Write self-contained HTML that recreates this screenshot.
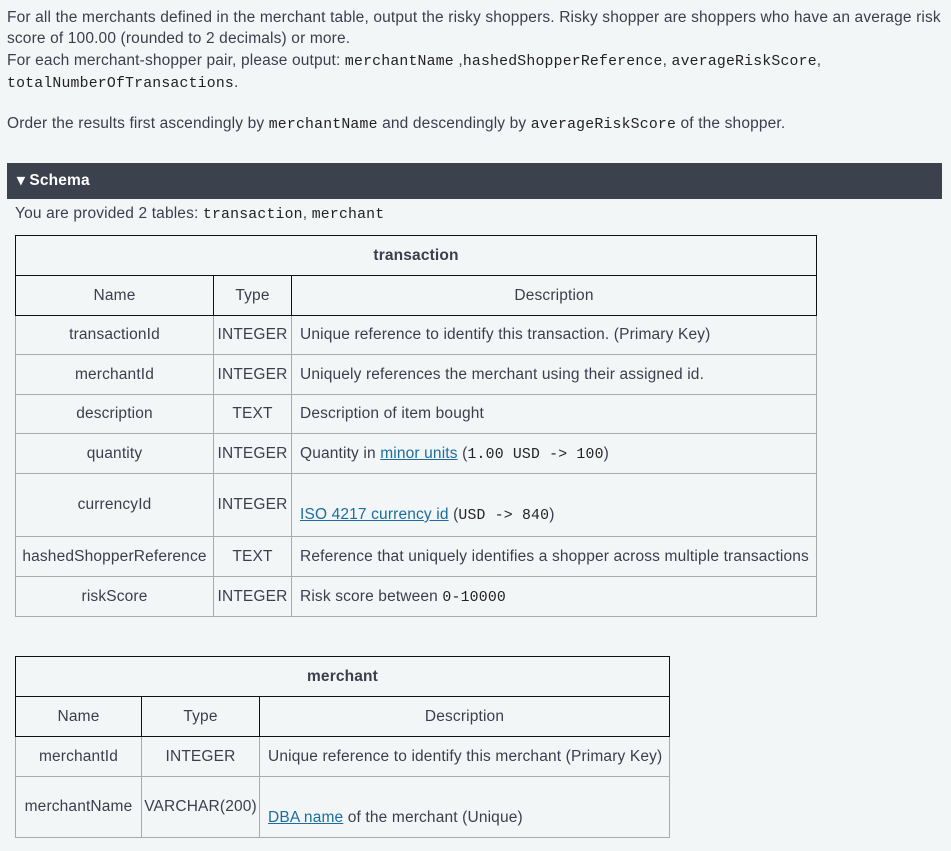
<!DOCTYPE html>
<html><head><meta charset="utf-8"><style>
body{margin:0;background:#f3f6f7;color:#3d3d4d;font-family:"Liberation Sans",sans-serif;font-size:15.5px;letter-spacing:0.15px;width:951px;height:851px;overflow:hidden;position:relative}
code{font-family:"Liberation Mono",monospace;font-size:14.8px;letter-spacing:0.2px;color:#222}
.p{position:absolute;left:7px;line-height:20.5px;white-space:nowrap}
.bar{position:absolute;left:7px;top:163px;width:935px;height:36px;background:#3b414d;color:#fff;font-weight:bold;font-size:15.5px;line-height:36px;box-sizing:border-box;padding-left:10px}
table{position:absolute;border-collapse:collapse;table-layout:fixed;border:1.5px solid #111}
td{border:1px solid #aaa;text-align:center;padding:0;white-space:nowrap}
tr.h td{border:1.5px solid #111}
td.l{text-align:left;padding-left:8px}
a{color:#1a6d9e;text-decoration:underline}
</style></head><body>
<div class="p" style="top:8px">For all the merchants defined in the merchant table, output the risky shoppers. Risky shopper are shoppers who have an average risk<br>score of 100.00 (rounded to 2 decimals) or more.</div>
<div class="p" style="top:51px">For each merchant-shopper pair, please output: <code>merchantName</code> ,<code>hashedShopperReference</code>, <code>averageRiskScore</code>,<br><code>totalNumberOfTransactions</code>.</div>
<div class="p" style="top:114px">Order the results first ascendingly by <code>merchantName</code> and descendingly by <code>averageRiskScore</code> of the shopper.</div>
<div class="bar">▾ Schema</div>
<div class="p" style="top:204px;left:15px">You are provided 2 tables: <code>transaction</code>, <code>merchant</code></div>
<table style="left:15px;top:235px;width:802px">
<col style="width:198px"><col style="width:78px"><col>
<tr class="h" style="height:40px"><td colspan="3" style="font-weight:bold">transaction</td></tr>
<tr class="h" style="height:40px"><td>Name</td><td>Type</td><td>Description</td></tr>
<tr style="height:39px"><td>transactionId</td><td>INTEGER</td><td class="l">Unique reference to identify this transaction. (Primary Key)</td></tr>
<tr style="height:40px"><td>merchantId</td><td>INTEGER</td><td class="l">Uniquely references the merchant using their assigned id.</td></tr>
<tr style="height:39px"><td>description</td><td>TEXT</td><td class="l">Description of item bought</td></tr>
<tr style="height:40px"><td>quantity</td><td>INTEGER</td><td class="l">Quantity in <a>minor units</a> (<code>1.00 USD -&gt; 100</code>)</td></tr>
<tr style="height:63px"><td>currencyId</td><td>INTEGER</td><td class="l" style="padding-top:20px"><a>ISO 4217 currency id</a> (<code>USD -&gt; 840</code>)</td></tr>
<tr style="height:40px"><td>hashedShopperReference</td><td>TEXT</td><td class="l">Reference that uniquely identifies a shopper across multiple transactions</td></tr>
<tr style="height:40px"><td>riskScore</td><td>INTEGER</td><td class="l">Risk score between <code>0-10000</code></td></tr>
</table>
<table style="left:15px;top:656px;width:655px">
<col style="width:126px"><col style="width:118px"><col>
<tr class="h" style="height:40px"><td colspan="3" style="font-weight:bold">merchant</td></tr>
<tr class="h" style="height:40px"><td>Name</td><td>Type</td><td>Description</td></tr>
<tr style="height:40px"><td>merchantId</td><td>INTEGER</td><td class="l">Unique reference to identify this merchant (Primary Key)</td></tr>
<tr style="height:61px"><td>merchantName</td><td>VARCHAR(200)</td><td class="l" style="padding-top:22px"><a>DBA name</a> of the merchant (Unique)</td></tr>
</table>
</body></html>
